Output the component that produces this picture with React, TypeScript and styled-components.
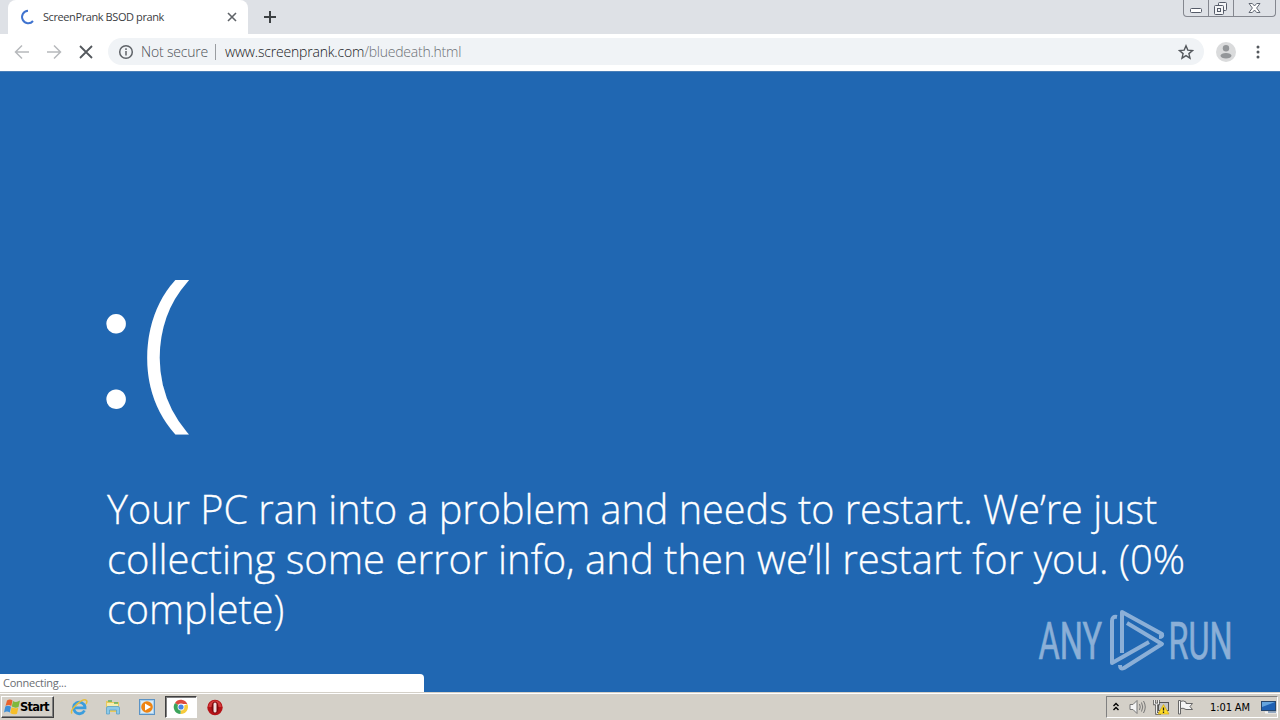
import React, { FC, ReactNode } from 'react';
import styled, { createGlobalStyle, css } from 'styled-components';

const GlobalStyle = createGlobalStyle`
	* {
		box-sizing: border-box;
	}
	body {
		margin: 0;
		overflow: hidden;
	}
	svg {
		display: block;
		flex: none;
	}
`;

const Desktop = styled.div`
	display: flex;
	flex-direction: column;
	width: 1280px;
	height: 720px;
	overflow: hidden;
	font-family: 'Open Sans', 'Noto Sans', sans-serif;
	background: #d4d0c8;
`;

const TabStrip = styled.div`
	display: flex;
	flex: none;
	height: 34px;
	padding-left: 8px;
	background: #dee1e6;
`;

const Tab = styled.div`
	display: flex;
	align-items: center;
	width: 240px;
	height: 34px;
	padding: 0 10px 0 12px;
	background: #fff;
	border-radius: 8px 8px 0 0;
`;

const TabTitle = styled.span`
	flex: 1;
	margin-left: 7px;
	font-size: 11px;
	letter-spacing: -0.41px;
	line-height: 16px;
	white-space: nowrap;
	color: #3c4043;
`;

const NewTab = styled.div`
	display: flex;
	align-items: center;
	margin-left: 15px;
`;

const WindowControls = styled.div`
	display: flex;
	height: 17px;
	margin-left: auto;
	margin-right: 4px;
	border: 1px solid #84878f;
	border-top: none;
	border-radius: 0 0 4px 4px;
`;

const WindowButton = styled.div<{ $width: number }>`
	display: flex;
	align-items: center;
	justify-content: center;
	width: ${({ $width }) => $width}px;
	& + & {
		border-left: 1px solid #84878f;
	}
`;

const Toolbar = styled.div`
	display: flex;
	flex: none;
	align-items: center;
	height: 37px;
	padding: 0 14px 2px 14px;
	background: #fff;
`;

const NavButtons = styled.div`
	display: flex;
	gap: 16px;
	margin-right: 14px;
`;

const AddressBar = styled.div`
	display: flex;
	flex: none;
	align-items: center;
	width: 1096px;
	height: 27px;
	padding: 0 10px;
	background: #f0f3f6;
	border-radius: 14px;
	font-size: 14px;
	font-weight: 300;
	line-height: 20px;
	white-space: nowrap;
`;

const Security = styled.span`
	width: 74px;
	margin-left: 7px;
	letter-spacing: -0.18px;
	color: #4d5156;
`;

const Separator = styled.div`
	width: 1px;
	height: 16px;
	margin-right: 9px;
	background: #9a9da1;
`;

const Url = styled.span`
	flex: 1;
	letter-spacing: -0.23px;
	color: #6c7075;
`;

const Host = styled.span`
	color: #17191c;
	letter-spacing: -0.19px;
`;

const Avatar = styled.div`
	margin: 0 14px 0 12px;
`;

const Page = styled.main`
	position: relative;
	flex: none;
	height: 621px;
	padding: 168px 0 0 106px;
	color: #fff;
	background: #2067b2;
	border-top: 1px solid #4a7fb8;
`;

const Sadness = styled.div`
	display: flex;
	height: 243px;
	font-weight: 300;
	line-height: 200px;
	-webkit-text-stroke: 2px #fff;
`;

const Colon = styled.span`
	width: 35px;
	margin-top: -6px;
	margin-left: -12.5px;
	font-family: Lato, sans-serif;
	font-size: 189px;
`;

const Paren = styled.span`
	margin-top: -1px;
	margin-left: 12.5px;
	font-size: 174px;
	-webkit-text-stroke-width: 2.8px;
	transform: scaleX(1.08);
	transform-origin: left;
`;

const Line = styled.div<{ $stretch: number }>`
	width: max-content;
	height: 50px;
	margin-left: 0.5px;
	font-size: 41px;
	font-weight: 300;
	line-height: 50px;
	white-space: nowrap;
	-webkit-text-stroke: 0.3px #fff;
	transform: scaleX(${({ $stretch }) => $stretch});
	transform-origin: left;
`;

const Watermark = styled.div`
	position: absolute;
	right: 42px;
	bottom: 20px;
`;

const StatusBubble = styled.div`
	position: absolute;
	left: 0;
	bottom: 0;
	width: 424px;
	height: 18px;
	padding-left: 3px;
	font-size: 11px;
	letter-spacing: -0.25px;
	line-height: 18px;
	color: #6b6e72;
	background: #fff;
	border-top-right-radius: 4px;
`;

const Taskbar = styled.footer`
	display: flex;
	flex: none;
	align-items: center;
	height: 28px;
	padding-top: 1px;
	background: #d4d0c8;
	border-top: 1px solid #d4d0c8;
	box-shadow: inset 0 1px 0 #fff;
`;

const raised = css`
	border: 1px solid;
	border-color: #fff #404040 #404040 #fff;
	box-shadow: inset -1px -1px 0 #808080;
`;

const sunken = css`
	border: 1px solid;
	border-color: #404040 #fff #fff #404040;
	box-shadow: inset 1px 1px 0 #808080;
	background: #fff;
`;

const StartButton = styled.div`
	display: flex;
	align-items: center;
	width: 53px;
	height: 22px;
	margin-left: 1px;
	padding-left: 2px;
	font: bold 11.5px 'DejaVu Sans', sans-serif;
	letter-spacing: -0.8px;
	color: #000;
	${raised}
`;

const Launchers = styled.div`
	display: flex;
	margin-left: 9px;
	gap: 2px;
`;

const Launcher = styled.div<{ $active?: boolean }>`
	display: flex;
	align-items: center;
	justify-content: center;
	width: 32px;
	height: 22px;
	${({ $active }) => $active && sunken}
`;

const Tray = styled.div`
	display: flex;
	align-items: center;
	width: 172px;
	height: 22px;
	margin-left: auto;
	margin-right: 2px;
	padding-left: 5px;
	border: 1px solid;
	border-color: #808080 #fff #fff #808080;
`;

const TrayIcon = styled.div<{ $left?: number }>`
	margin-left: ${({ $left }) => $left || 0}px;
`;

const Clock = styled.span`
	width: 43px;
	margin-left: 15px;
	font: 11px 'DejaVu Sans Condensed', 'DejaVu Sans', sans-serif;
	font-stretch: condensed;
	letter-spacing: -0.1px;
	white-space: nowrap;
	color: #000;
`;

type StrokeIconProps = { size: number; color: string; width?: number; children: ReactNode };

const StrokeIcon: FC<StrokeIconProps> = ({ size, color, width = 1.5, children }) => (
	<svg width={size} height={size} viewBox={`0 0 ${size} ${size}`} fill="none" stroke={color} strokeWidth={width}>
		{children}
	</svg>
);

const BrowserTabs: FC = () => (
	<TabStrip>
		<Tab>
			<StrokeIcon size={16} color="#3f73cf" width={2}>
				<path d="M8 1.8A6.2 6.2 0 1 0 13 12" />
			</StrokeIcon>
			<TabTitle>ScreenPrank BSOD prank</TabTitle>
			<StrokeIcon size={12} color="#5f6368" width={1.6}>
				<path d="M2 2l8 8M10 2l-8 8" />
			</StrokeIcon>
		</Tab>
		<NewTab>
			<StrokeIcon size={14} color="#3c4043" width={2}>
				<path d="M7 1v12M1 7h12" />
			</StrokeIcon>
		</NewTab>
		<WindowControls>
			<WindowButton $width={24}>
				<svg width="13" height="17" viewBox="0 0 13 17" fill="#fff" stroke="#555b68">
					<rect x="0.5" y="8.5" width="11" height="4" rx="1" />
				</svg>
			</WindowButton>
			<WindowButton $width={25}>
				<svg width="14" height="17" viewBox="0 0 14 17" fill="#f4f5f7" stroke="#555b68">
					<rect x="4.5" y="2.5" width="8" height="8" rx="1" />
					<rect x="0.5" y="5.5" width="9" height="9" rx="1" />
					<rect x="3.5" y="8.5" width="3" height="3" />
				</svg>
			</WindowButton>
			<WindowButton $width={42}>
				<svg width="13" height="17" viewBox="0 0 13 17" fill="#fff" stroke="#555b68" strokeWidth="0.9">
					<path d="M1 3.500H4.300L6.500 6L8.700 3.500H12L8.600 8L12 12.500H8.700L6.500 10L4.300 12.500H1L4.400 8Z" />
				</svg>
			</WindowButton>
		</WindowControls>
	</TabStrip>
);

const BrowserToolbar: FC = () => (
	<Toolbar>
		<NavButtons>
			<StrokeIcon size={16} color="#b7b9bc">
				<path d="M15 8H2M8 1.500L1.500 8L8 14.500" />
			</StrokeIcon>
			<StrokeIcon size={16} color="#b7b9bc">
				<path d="M1 8H14M8 1.500L14.500 8L8 14.500" />
			</StrokeIcon>
			<StrokeIcon size={16} color="#54585d" width={1.8}>
				<path d="M2 2l12 12M14 2L2 14" />
			</StrokeIcon>
		</NavButtons>
		<AddressBar>
			<StrokeIcon size={16} color="#5f6368">
				<circle cx="8" cy="8" r="6.300" />
				<path d="M8 7v4.500M8 4.300v1.600" />
			</StrokeIcon>
			<Security>Not secure</Security>
			<Separator />
			<Url>
				<Host>www.screenprank.com</Host>/bluedeath.html
			</Url>
			<StrokeIcon size={16} color="#54585d" width={1.4}>
				<path d="M8 1.800L9.800 6.100L14.500 6.500L10.900 9.600L12 14.200L8 11.700L4 14.200L5.100 9.600L1.500 6.500L6.200 6.100Z" />
			</StrokeIcon>
		</AddressBar>
		<Avatar>
			<svg width="20" height="20" viewBox="0 0 20 20">
				<circle cx="10" cy="10" r="10" fill="#dadbdc" />
				<circle cx="10" cy="6.300" r="3.200" fill="#939699" />
				<ellipse cx="10" cy="13.800" rx="5.500" ry="2.800" fill="#939699" />
			</svg>
		</Avatar>
		<svg width="16" height="16" viewBox="0 0 16 16" fill="#54585d">
			<circle cx="8" cy="3" r="1.500" />
			<circle cx="8" cy="8" r="1.500" />
			<circle cx="8" cy="13" r="1.500" />
		</svg>
	</Toolbar>
);

const AnyRunLogo: FC = () => (
	<svg width="200" height="64" viewBox="0 0 200 64">
		<g opacity="0.58" fill="#d8e4f2" stroke="#d8e4f2">
			<g fontFamily="Roboto, sans-serif" fontSize="52" strokeWidth="0.6">
				<text transform="translate(0.5 51) scale(0.625 1)">ANY</text>
				<text transform="translate(130.5 51) scale(0.622 1)">RUN</text>
			</g>
			<g fill="none" strokeWidth="4" strokeLinejoin="round">
				<path d="M79 9Q74 8 74 13V55L111 34" />
				<path d="M84 45V4L124 26Q125 29 121 29" />
				<path d="M89 15L124 36L86 60Q82 62 82 57" />
			</g>
		</g>
	</svg>
);

const WindowsFlag: FC = () => (
	<svg width="16" height="16" viewBox="0 0 16 16">
		<path d="M3 1.500Q6 -0.500 8.500 1.500L7.300 7Q4.500 5 1.500 7Z" fill="#e8622c" />
		<path d="M9 2Q12 4 16 1.500L14.500 8Q11 9.500 7.800 7.500Z" fill="#7fb83c" />
		<path d="M1.300 7.600Q4 6 7 7.800L5.800 13.500Q3 11.500 0 13.500Z" fill="#3d8fd8" />
		<path d="M7.600 8.300Q11 10 14.300 8.700L13 14.700Q9 16 6.300 14Z" fill="#f6be28" />
	</svg>
);

const ExplorerIcon: FC = () => (
	<svg width="18" height="18" viewBox="0 0 18 18" fill="none">
		<path d="M14.500 12.500A5.800 5.800 0 1 1 15 8.800L15 9.800H5" stroke="#3b9ddd" strokeWidth="2.800" />
		<path d="M2 15.500C-1 12 13 -1 16.500 2.500Q17.500 4 16 6" stroke="#e5bd3e" strokeWidth="1.500" />
	</svg>
);

const FolderIcon: FC = () => (
	<svg width="18" height="18" viewBox="0 0 18 18">
		<path d="M2 3H7L8 4H15V14H2Z" fill="#e8c95c" />
		<path d="M3 5H14V8H3Z" fill="#f8edac" />
		<path d="M4 3H8M10 5H14" stroke="#5fae61" strokeWidth="1.500" />
		<path d="M2.500 16V10Q2.500 8.500 4 8.500H14Q15.500 8.500 15.500 10V16H12.500V12H5.500V16Z" fill="#8dc9e9" stroke="#5ba3cd" strokeWidth="0.800" />
	</svg>
);

const PlayerIcon: FC = () => (
	<svg width="18" height="18" viewBox="0 0 18 18">
		<rect x="1.500" y="1.500" width="15" height="15" fill="#a9d0ee" stroke="#5b93c5" />
		<rect x="3" y="3" width="12" height="12" fill="#d9ebf7" />
		<circle cx="9" cy="9" r="5.800" fill="#ee8413" />
		<path d="M7 5.500L13 9L7 12.500Z" fill="#fff" />
	</svg>
);

const ChromeIcon: FC = () => (
	<svg width="16" height="16" viewBox="0 0 16 16">
		<path d="M8 8L2 4A7 7 0 0 1 14.300 5H8Z" fill="#dd4b3e" />
		<path d="M8 8L14.300 5A7 7 0 0 1 7.500 15Z" fill="#f7cb3b" />
		<path d="M8 8L7.500 15A7 7 0 0 1 2 4Z" fill="#3ca45b" />
		<circle cx="8" cy="8" r="3.400" fill="#fff" />
		<circle cx="8" cy="8" r="2.600" fill="#4884e5" />
	</svg>
);

const OperaIcon: FC = () => (
	<svg width="17" height="17" viewBox="0 0 17 17">
		<circle cx="8" cy="8.500" r="7.700" fill="#b51217" />
		<path d="M1.500 8A6.500 6.500 0 0 1 14.500 8Z" fill="#d23b3c" />
		<ellipse cx="8" cy="8.500" rx="3.500" ry="6" fill="#7d080c" />
		<rect x="6.500" y="3.500" width="3" height="10" rx="1.500" fill="#f1dede" />
	</svg>
);

const TrayIcons: FC = () => (
	<>
		<svg width="8" height="12" viewBox="0 0 8 12" fill="none" stroke="#000" strokeWidth="1.400">
			<path d="M1.500 5L4 2.500L6.500 5M1.500 9L4 6.500L6.500 9" />
		</svg>
		<TrayIcon $left={9}>
			<svg width="17" height="16" viewBox="0 0 17 16" fill="none" stroke="#777">
				<path d="M1 5.500H4L8 1.500V14.500L4 10.500H1Z" fill="#f5f5f5" />
				<path d="M10.500 5Q12 8 10.500 11M12.500 3.500Q15 8 12.500 12.500M14.500 2Q18 8 14.500 14" />
			</svg>
		</TrayIcon>
		<TrayIcon $left={7}>
			<svg width="17" height="16" viewBox="0 0 17 16" fill="none">
				<rect x="5.500" y="3.500" width="10" height="8" fill="#c3c5c5" stroke="#555" />
				<path d="M1.500 1V5H5.500V1M3.500 5V14.500H8" stroke="#555" strokeWidth="2.500" />
				<path d="M1.500 1V5H5.500V1M3.500 5V14.500H8" stroke="#eee" />
				<path d="M10.500 5.500L16 15H5Z" fill="#ffdc26" stroke="#d0a817" strokeWidth="0.700" />
				<path d="M10.500 8.500V11.500M10.500 12.500V14" stroke="#222" strokeWidth="1.300" />
			</svg>
		</TrayIcon>
		<TrayIcon $left={7}>
			<svg width="18" height="16" viewBox="0 0 18 16" fill="#f5f5f5" stroke="#666">
				<path d="M1.500 1.500H3.500V15H1.500Z" />
				<path d="M3.500 2.500Q6 1 9 3V4.500H15.500L13 7.500L15.500 10.500H9Q6 8.500 3.500 9.500Z" />
			</svg>
		</TrayIcon>
		<Clock>1:01 AM</Clock>
		<TrayIcon $left={8}>
			<svg width="16" height="14" viewBox="0 0 16 14">
				<rect x="0.500" y="1.500" width="14" height="9" fill="#1f61b3" stroke="#27476e" />
				<path d="M1 2H14L1 7Z" fill="#65a5df" />
				<path d="M4 12.500H16" stroke="#f4f4f4" strokeWidth="2" />
				<path d="M7 12H15" stroke="#38618e" />
			</svg>
		</TrayIcon>
	</>
);

const App: FC = () => {
	return (
		<Desktop>
			<GlobalStyle />
			<BrowserTabs />
			<BrowserToolbar />
			<Page>
				<Sadness>
					<Colon>:</Colon>
					<Paren>(</Paren>
				</Sadness>
				<Line $stretch={0.966}>Your PC ran into a problem and needs to restart. We’re just</Line>
				<Line $stretch={0.9755}>collecting some error info, and then we’ll restart for you. (0%</Line>
				<Line $stretch={0.967}>complete)</Line>
				<Watermark>
					<AnyRunLogo />
				</Watermark>
				<StatusBubble>Connecting...</StatusBubble>
			</Page>
			<Taskbar>
				<StartButton>
					<WindowsFlag />
					Start
				</StartButton>
				<Launchers>
					<Launcher><ExplorerIcon /></Launcher>
					<Launcher><FolderIcon /></Launcher>
					<Launcher><PlayerIcon /></Launcher>
					<Launcher $active><ChromeIcon /></Launcher>
					<Launcher><OperaIcon /></Launcher>
				</Launchers>
				<Tray>
					<TrayIcons />
				</Tray>
			</Taskbar>
		</Desktop>
	);
};

export default App;
